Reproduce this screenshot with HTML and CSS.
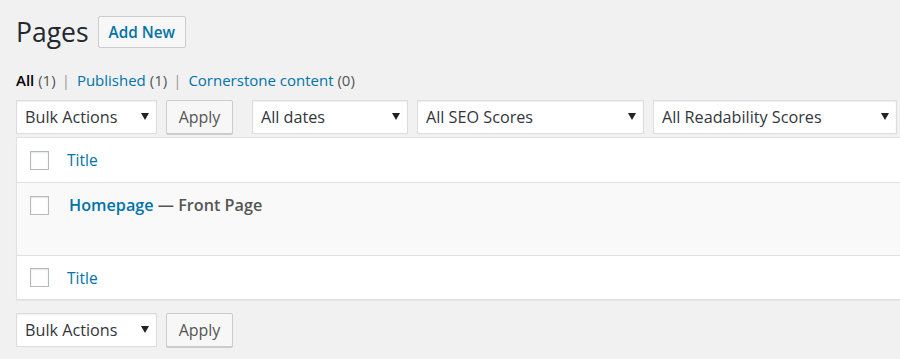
FILE: index.html
```html
<!DOCTYPE html>
<html lang="en">
<head>
    <meta charset="UTF-8">
    <meta name="viewport" content="width=device-width, initial-scale=1.0">
    <title>Pages</title>
    <link rel="stylesheet" href="styles.css">
</head>
<body>
    <div class="wrap">
        <div class="page-head">
            <h1>Pages</h1>
            <a class="page-title-action" href="#">Add New</a>
        </div>

        <ul class="subsubsub">
            <li><a class="current" href="#">All <span class="count">(1)</span></a><span class="sep">|</span></li>
            <li><a href="#">Published <span class="count">(1)</span></a><span class="sep">|</span></li>
            <li><a href="#">Cornerstone content <span class="count">(0)</span></a></li>
        </ul>

        <div class="tablenav">
            <div class="select bulk"><span>Bulk Actions</span><i class="arrow"></i></div>
            <button class="button">Apply</button>
            <div class="select dates"><span>All dates</span><i class="arrow"></i></div>
            <div class="select seo"><span>All SEO Scores</span><i class="arrow"></i></div>
            <div class="select readability"><span>All Readability Scores</span><i class="arrow"></i></div>
        </div>

        <div class="list-table">
            <div class="row head">
                <span class="check"></span>
                <a class="col-title" href="#">Title</a>
            </div>
            <div class="row item">
                <span class="check"></span>
                <strong class="row-title"><a href="#">Homepage</a> — Front Page</strong>
            </div>
            <div class="row foot">
                <span class="check"></span>
                <a class="col-title" href="#">Title</a>
            </div>
        </div>

        <div class="tablenav bottom">
            <div class="select bulk"><span>Bulk Actions</span><i class="arrow"></i></div>
            <button class="button">Apply</button>
        </div>
    </div>
</body>
</html>
```

FILE: styles.css
```css
body, html {
    margin: 0;
    padding: 0;
    height: 100%;
    overflow: hidden;
    font-family: "Open Sans", Arial, sans-serif;
}

body {
    background: #f1f1f1;
    color: #444;
}

a {
    color: #0073aa;
    text-decoration: none;
}

.wrap {
    padding: 16px 0 0 16px;
}

/* Heading */
.page-head {
    display: flex;
    align-items: center;
    height: 32px;
}

    .page-head h1 {
        margin: 0 9px 0 0;
        font-size: 26.5px;
        font-weight: 400;
        line-height: 32px;
        color: #23282d;
    }

.page-title-action {
    display: inline-block;
    height: 30px;
    line-height: 30px;
    padding: 0 10px;
    border: 1px solid #ccc;
    border-radius: 2px;
    background: #f7f7f7;
    font-size: 15.3px;
    font-weight: 600;
}

/* Status links */
.subsubsub {
    list-style: none;
    margin: 22px 0 0;
    padding: 0;
    display: flex;
    font-size: 15px;
    line-height: 20px;
}

    .subsubsub a.current {
        color: #000;
        font-weight: 600;
    }

    .subsubsub .count {
        color: #555;
        font-weight: 400;
    }

    .subsubsub .sep {
        color: #999;
        margin: 0 7px 0 6px;
    }

/* Filter bar */
.tablenav {
    display: flex;
    align-items: center;
    margin-top: 10px;
    height: 34px;
}

    .tablenav.bottom {
        margin-top: 13px;
    }

.select {
    box-sizing: border-box;
    display: flex;
    align-items: center;
    justify-content: space-between;
    height: 34px;
    padding: 0 7px 0 8px;
    margin-right: 9px;
    background: #fff;
    border: 1px solid #ddd;
    box-shadow: inset 0 1px 2px rgba(0, 0, 0, 0.07);
    font-size: 16.2px;
    color: #32373c;
}

    .select.bulk { width: 141px; }
    .select.dates { width: 156px; margin-left: 19px; }
    .select.seo { width: 227px; }
    .select.readability { width: 244px; margin-right: 0; }

.arrow {
    width: 0;
    height: 0;
    border-left: 4px solid transparent;
    border-right: 4px solid transparent;
    border-top: 7px solid #222;
    margin-top: -2px;
}

.button {
    box-sizing: border-box;
    height: 34px;
    width: 67px;
    padding: 0;
    border: 1px solid #ccc;
    border-radius: 2px;
    background: #f7f7f7;
    box-shadow: 0 1px 0 #ccc;
    font-family: inherit;
    font-size: 16px;
    color: #555;
    margin-top: -1px;
}

/* List table */
.list-table {
    margin: 3px -20px 0 0;
    border: 1px solid #e1e1e1;
    box-shadow: 0 1px 1px rgba(0, 0, 0, 0.04);
    background: #fff;
}

.row {
    display: flex;
    align-items: center;
    padding-left: 13px;
}

    .row.head {
        height: 44px;
        border-bottom: 1px solid #e1e1e1;
    }

    .row.item {
        height: 72px;
        align-items: flex-start;
        background: #f9f9f9;
    }

    .row.foot {
        height: 43px;
        border-top: 1px solid #e1e1e1;
    }

.check {
    box-sizing: border-box;
    width: 19px;
    height: 19px;
    border: 1px solid #b4b9be;
    background: #fff;
    box-shadow: inset 0 1px 2px rgba(0, 0, 0, 0.1);
    flex: none;
}

.col-title {
    margin-left: 18px;
    font-size: 15.5px;
}

.item .check {
    margin-top: 13px;
}

.row-title {
    margin: 12px 0 0 20px;
    font-size: 16.2px;
    font-weight: 600;
    line-height: 20px;
    color: #555;
}
```
